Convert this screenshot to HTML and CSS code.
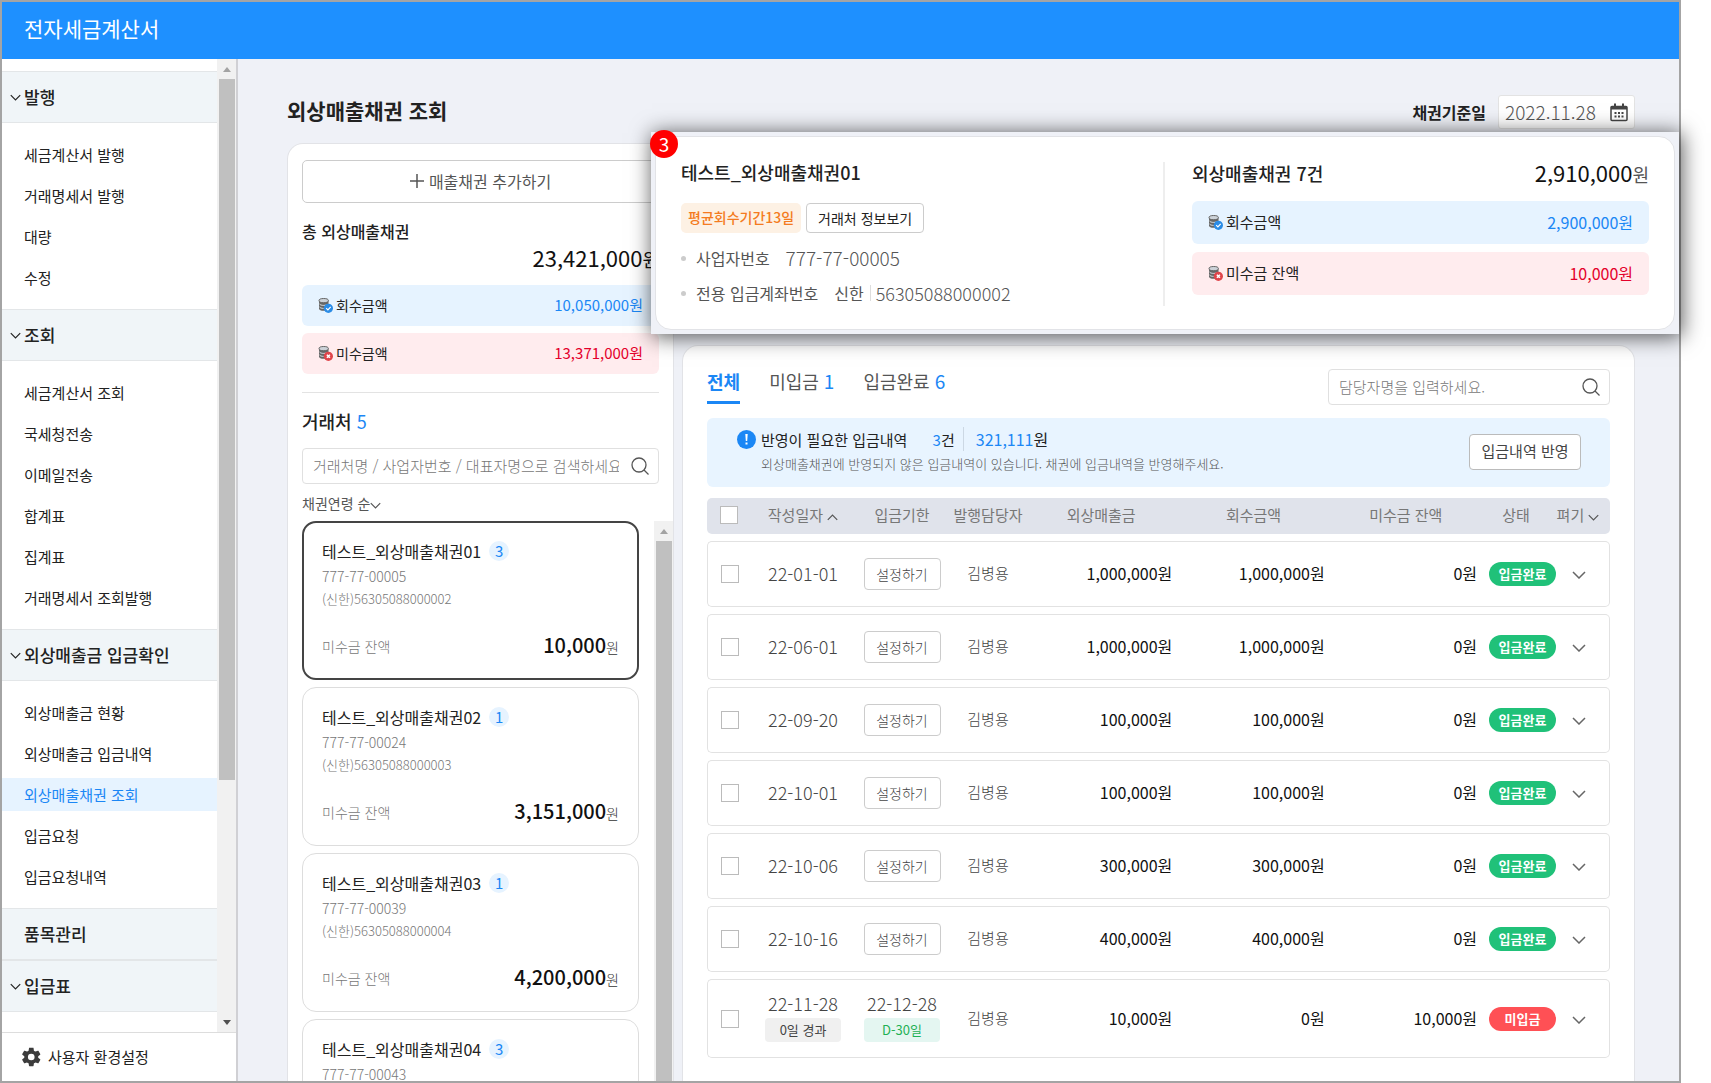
FILE: index.html
```html
<!DOCTYPE html>
<html lang="ko">
<head>
  <meta charset="UTF-8" />
  <title>외상매출채권 조회</title>
  <link rel="stylesheet" href="styles.css">
</head>
<body>
  <!-- Shared icons -->
  <svg class="icon-defs" aria-hidden="true">
    <symbol id="i-down" viewBox="0 0 14 8"><path d="M1 1l6 6 6-6" fill="none" stroke="currentColor" stroke-width="1.5"/></symbol>
    <symbol id="i-up" viewBox="0 0 14 8"><path d="M1 7l6-6 6 6" fill="none" stroke="currentColor" stroke-width="1.5"/></symbol>
    <symbol id="i-search" viewBox="0 0 18 18"><circle cx="8" cy="8" r="7" fill="none" stroke="currentColor" stroke-width="1.3"/><path d="M13 13l4.5 4.5" stroke="currentColor" stroke-width="1.3"/></symbol>
    <symbol id="i-plus" viewBox="0 0 14 14"><path d="M7 0v14M0 7h14" stroke="currentColor" stroke-width="1.5"/></symbol>
    <symbol id="i-coins" viewBox="0 0 15 15">
      <path d="M1 2.5v8.2c0 1.2 2 2.1 4.7 2.1s4.8-.9 4.8-2.1V2.5z" fill="#666"/>
      <ellipse cx="5.7" cy="2.6" rx="4.7" ry="2.1" fill="#ccd2d8" stroke="#666"/>
      <path d="M1.5 6c.8 1 2.3 1.4 4.2 1.4S9.2 7 10 6M1.5 9c.8 1 2.3 1.4 4.2 1.4" fill="none" stroke="#dde3e8"/>
    </symbol>
    <symbol id="i-paid" viewBox="0 0 15 15">
      <use href="#i-coins"/>
      <circle cx="10.4" cy="10.3" r="4.6" fill="#2b8ce6"/>
      <path d="M8.2 10.2l1.7 1.7 2.8-3" fill="none" stroke="#fff" stroke-width="1.2"/>
    </symbol>
    <symbol id="i-unpaid" viewBox="0 0 15 15">
      <use href="#i-coins"/>
      <circle cx="10.4" cy="10.3" r="4.6" fill="#e0454b"/>
      <path d="M8.9 8.8l3 3m0-3l-3 3" stroke="#fff" stroke-width="1.6"/>
    </symbol>
  </svg>

  <div class="app">
    <header class="topbar">전자세금계산서</header>

    <div class="body">
      <aside class="sidebar">
        <div class="menu-wrap">
          <nav class="menu">
            <h2><svg class="chev"><use href="#i-down"/></svg>발행</h2>
            <div class="menu-list">
              <a href="#">세금계산서 발행</a>
              <a href="#">거래명세서 발행</a>
              <a href="#">대량</a>
              <a href="#">수정</a>
            </div>
            <h2><svg class="chev"><use href="#i-down"/></svg>조회</h2>
            <div class="menu-list">
              <a href="#">세금계산서 조회</a>
              <a href="#">국세청전송</a>
              <a href="#">이메일전송</a>
              <a href="#">합계표</a>
              <a href="#">집계표</a>
              <a href="#">거래명세서 조회발행</a>
            </div>
            <h2><svg class="chev"><use href="#i-down"/></svg>외상매출금 입금확인</h2>
            <div class="menu-list">
              <a href="#">외상매출금 현황</a>
              <a href="#">외상매출금 입금내역</a>
              <a href="#" class="active">외상매출채권 조회</a>
              <a href="#">입금요청</a>
              <a href="#">입금요청내역</a>
            </div>
            <h2 class="plain">품목관리</h2>
            <h2><svg class="chev"><use href="#i-down"/></svg>입금표</h2>
          </nav>
          <div class="scrollbar menu-scroll">
            <span class="arrow up"></span>
            <span class="thumb"></span>
            <span class="arrow down"></span>
          </div>
        </div>
        <a href="#" class="settings">
          <svg width="20" height="20" viewBox="0 0 24 24"><path fill="#3c3c3c" d="M19.400 13c.1-.3.1-.7.1-1s0-.7-.1-1l2.400-1.800c.2-.2.300-.5.1-.7l-2.200-3.900c-.1-.2-.4-.3-.7-.2l-2.800 1.100c-.6-.4-1.200-.8-1.900-1.100L13.900 1.500c0-.3-.3-.5-.5-.5h-4.500c-.3 0-.5.2-.5.5L7.900 4.400c-.7.3-1.300.6-1.900 1.100L3.300 4.400c-.3-.1-.6 0-.7.2L.3 8.500c-.1.2-.1.500.1.700L2.800 11c0 .3-.1.700-.1 1s0 .7.1 1L.4 14.800c-.2.2-.3.500-.1.700l2.300 3.900c.1.200.4.3.7.2L6 18.500c.6.400 1.200.8 1.900 1.100l.5 2.900c0 .3.2.5.5.5h4.500c.2 0 .5-.2.5-.5l.4-2.900c.7-.3 1.300-.6 1.900-1.100l2.800 1.100c.3.1.6 0 .7-.2l2.200-3.900c.2-.2.1-.5-.1-.7zM11.100 16a4 4 0 1 1 0-8 4 4 0 0 1 0 8z"/></svg>
          사용자 환경설정
        </a>
      </aside>

      <main class="content">
        <div class="page-head">
          <h1>외상매출채권 조회</h1>
          <div class="date-field">
            <label for="baseDate">채권기준일</label>
            <div class="date-box">
              <input type="text" id="baseDate" value="2022.11.28">
              <svg width="18" height="20" viewBox="0 0 18 20"><path d="M2 4.500h14a1 1 0 0 1 1 1v12a1 1 0 0 1-1 1H2a1 1 0 0 1-1-1v-12a1 1 0 0 1 1-1z" fill="none" stroke="#444" stroke-width="1.500"/><path d="M1 4h16v3.500H1zM4 1.500h2v4H4zM12 1.500h2v4h-2z" fill="#444"/><path d="M4.500 10h2v2h-2zM8 10h2v2H8zM11.500 10h2v2h-2zM4.500 13.500h2v2h-2zM8 13.500h2v2H8zM11.500 13.500h2v2h-2z" fill="#444"/></svg>
            </div>
          </div>
        </div>

        <div class="columns">
          <!-- Customer list -->
          <section class="panel side">
            <button class="add-btn"><svg width="14" height="14"><use href="#i-plus"/></svg>매출채권 추가하기</button>
            <h3 class="total-label">총 외상매출채권</h3>
            <p class="total">23,421,000<span>원</span></p>
            <div class="sum blue"><svg class="coin"><use href="#i-paid"/></svg>회수금액<b>10,050,000원</b></div>
            <div class="sum red"><svg class="coin"><use href="#i-unpaid"/></svg>미수금액<b>13,371,000원</b></div>
            <hr>
            <h3 class="count-label">거래처 <em>5</em></h3>
            <div class="search">
              <input type="text" aria-label="거래처 검색" placeholder="거래처명 / 사업자번호 / 대표자명으로 검색하세요.">
              <svg width="18" height="18"><use href="#i-search"/></svg>
            </div>
            <button class="sort">채권연령 순<svg class="chev"><use href="#i-down"/></svg></button>
            <div class="cards-wrap">
              <div class="cards" id="cards"></div>
              <div class="scrollbar"><span class="arrow up"></span><span class="thumb"></span></div>
            </div>
          </section>

          <!-- Receivables -->
          <section class="panel detail">
            <div class="tabs-row">
              <div class="tabs">
                <button class="active">전체</button>
                <button>미입금 <em>1</em></button>
                <button>입금완료 <em>6</em></button>
              </div>
              <div class="search manager">
                <input type="text" aria-label="담당자명" placeholder="담당자명을 입력하세요.">
                <svg width="18" height="18"><use href="#i-search"/></svg>
              </div>
            </div>

            <div class="notice">
              <svg class="notice-icon" width="19" height="19" viewBox="0 0 19 19"><circle cx="9.500" cy="9.500" r="9.500" fill="#1b87f5"/><path d="M8.300 4h2.400l-.5 7H8.800zM8.500 12.500h2v2h-2z" fill="#fff"/></svg>
              <div>
                <p class="notice-title">반영이 필요한 입금내역 <span class="notice-count"><em>3</em>건</span><span class="notice-sum"><em>321,111</em>원</span></p>
                <p class="notice-text">외상매출채권에 반영되지 않은 입금내역이 있습니다. 채권에 입금내역을 반영해주세요.</p>
              </div>
              <button>입금내역 반영</button>
            </div>

            <table>
              <colgroup>
                <col class="c-check"><col class="c-date"><col class="c-limit"><col class="c-name">
                <col><col><col>
                <col class="c-state"><col class="c-open">
              </colgroup>
              <thead>
                <tr>
                  <th class="check"><input type="checkbox" aria-label="전체 선택"></th>
                  <th>작성일자 <svg class="chev"><use href="#i-up"/></svg></th>
                  <th>입금기한</th>
                  <th>발행담당자</th>
                  <th>외상매출금</th>
                  <th>회수금액</th>
                  <th>미수금 잔액</th>
                  <th class="state">상태</th>
                  <th class="open">펴기 <svg class="chev"><use href="#i-down"/></svg></th>
                </tr>
              </thead>
              <tbody id="rows"></tbody>
            </table>
          </section>
        </div>
      </main>
    </div>

    <!-- Selected customer summary -->
    <div class="popup">
      <span class="step">3</span>
      <div class="popup-card">
        <div class="popup-info">
          <h3>테스트_외상매출채권01</h3>
          <div class="popup-tags">
            <span class="tag-orange">평균회수기간13일</span>
            <button>거래처 정보보기</button>
          </div>
          <ul>
            <li>사업자번호<span class="num">777-77-00005</span></li>
            <li>전용 입금계좌번호<span class="bank">신한</span><span class="num account">56305088000002</span></li>
          </ul>
        </div>
        <div class="popup-sum">
          <div class="popup-total">
            <h3>외상매출채권 7건</h3>
            <p>2,910,000<span>원</span></p>
          </div>
          <div class="sum blue"><svg class="coin"><use href="#i-paid"/></svg>회수금액<b>2,900,000원</b></div>
          <div class="sum red"><svg class="coin"><use href="#i-unpaid"/></svg>미수금 잔액<b>10,000원</b></div>
        </div>
      </div>
    </div>
  </div>

  <script>
    const customers = [
      { name: "테스트_외상매출채권01", count: 3, no: "777-77-00005", account: "56305088000002", balance: "10,000" },
      { name: "테스트_외상매출채권02", count: 1, no: "777-77-00024", account: "56305088000003", balance: "3,151,000" },
      { name: "테스트_외상매출채권03", count: 1, no: "777-77-00039", account: "56305088000004", balance: "4,200,000" },
      { name: "테스트_외상매출채권04", count: 3, no: "777-77-00043", account: "", balance: "" }
    ];

    const rows = [
      { date: "22-01-01", amount: "1,000,000", paid: "1,000,000", left: "0" },
      { date: "22-06-01", amount: "1,000,000", paid: "1,000,000", left: "0" },
      { date: "22-09-20", amount: "100,000", paid: "100,000", left: "0" },
      { date: "22-10-01", amount: "100,000", paid: "100,000", left: "0" },
      { date: "22-10-06", amount: "300,000", paid: "300,000", left: "0" },
      { date: "22-10-16", amount: "400,000", paid: "400,000", left: "0" },
      { date: "22-11-28", amount: "10,000", paid: "0", left: "10,000", passed: "0일 경과", limit: "22-12-28", dday: "D-30일" }
    ];

    document.getElementById("cards").innerHTML = customers.map((c, i) => `
      <article class="card ${i === 0 ? "selected" : ""}">
        <h4>${c.name}<span class="badge">${c.count}</span></h4>
        <p>${c.no}</p>
        ${c.account ? `<p class="card-account">(신한)${c.account}</p>` : ""}
        ${c.balance ? `<div class="card-sum">미수금 잔액<span><b>${c.balance}</b>원</span></div>` : ""}
      </article>
    `).join("");

    document.getElementById("rows").innerHTML = rows.map(r => `
      <tr>
        <td class="check"><input type="checkbox" aria-label="${r.date} 선택"></td>
        <td class="date">${r.date}${r.passed ? `<span class="tag">${r.passed}</span>` : ""}</td>
        <td class="date">${r.limit ? `${r.limit}<span class="tag green">${r.dday}</span>` : `<button class="set-btn">설정하기</button>`}</td>
        <td class="name">김병용</td>
        <td class="money">${r.amount}원</td>
        <td class="money">${r.paid}원</td>
        <td class="money">${r.left}원</td>
        <td><span class="pill ${r.limit ? "unpaid" : ""}">${r.limit ? "미입금" : "입금완료"}</span></td>
        <td class="open"><button class="open-btn" aria-label="펴기"><svg width="14" height="8"><use href="#i-down"/></svg></button></td>
      </tr>
    `).join("");
  </script>
</body>
</html>
```
FILE: styles.css
```css
* { box-sizing: border-box; }
body {
  margin: 0;
  padding-right: 30px;
  background: #fff;
  color: #222;
  font-family: "Noto Sans CJK KR", "Noto Sans", sans-serif;
  font-size: 15px;
  line-height: 20px;
  overflow: hidden;
}
h1, h2, h3, h4, p, ul { margin: 0; padding: 0; }
em { font-style: normal; color: #1b87f5; }
a { color: inherit; text-decoration: none; }
button, input { font: inherit; color: inherit; }
button { background: none; border: none; padding: 0; cursor: pointer; }
svg { flex: none; }
.icon-defs { display: none; }
.chev { width: 11px; height: 7px; }

.app {
  position: relative;
  display: flex;
  flex-direction: column;
  height: 100vh;
  border: 2px solid #a4a4a4;
}

.topbar {
  flex: none;
  height: 57px;
  padding-left: 22px;
  background: #1e90ff;
  color: #fff;
  font-size: 21px;
  line-height: 53px;
}

.body { flex: 1; min-height: 0; display: flex; }

/* Sidebar */
.sidebar {
  flex: none;
  width: 236px;
  display: flex;
  flex-direction: column;
  background: #fff;
  border-right: 2px solid #d0d0d4;
}
.menu-wrap { flex: 1; min-height: 0; display: flex; }
.menu { flex: 1; padding-top: 12px; overflow: hidden; }
.menu h2 {
  display: flex;
  align-items: center;
  gap: 3px;
  height: 52px;
  padding-left: 8px;
  background: #f0f5f8;
  border-top: 1px solid #e3e6e8;
  border-bottom: 1px solid #e3e6e8;
  font-size: 17px;
  font-weight: 500;
}
.menu h2.plain { padding-left: 22px; }
.menu-list {
  display: flex;
  flex-direction: column;
  gap: 8px;
  padding: 15px 0;
}
.menu-list a { padding-left: 22px; line-height: 33px; }
.menu-list a.active { background: #e6f3ff; color: #1b87f5; }
.settings {
  display: flex;
  align-items: center;
  gap: 6px;
  height: 49px;
  padding: 0 0 1px 20px;
  border-top: 1px solid #ddd;
}

.scrollbar {
  flex: none;
  width: 19px;
  display: flex;
  flex-direction: column;
  align-items: center;
  background: #f1f1f1;
}
.thumb { flex: 1; width: 16px; background: #c0c0c0; }
.arrow {
  flex: none;
  height: 20px;
  display: flex;
  align-items: center;
}
.arrow::before { content: ""; border: 4px solid transparent; }
.arrow.up::before { border-top: none; border-bottom: 5px solid #a3a3a3; }
.arrow.down::before { border-bottom: none; border-top: 5px solid #505050; }
.menu-scroll { justify-content: space-between; }
.menu-scroll .thumb { flex: none; height: 72%; margin-bottom: auto; }

/* Content */
.content {
  flex: 1;
  min-width: 0;
  display: flex;
  flex-direction: column;
  padding: 36px 44px 0 49px;
  background: #eff1f7;
}
.page-head {
  display: flex;
  justify-content: space-between;
  align-items: flex-start;
  margin-bottom: 14px;
}
h1 { font-size: 21px; line-height: 30px; font-weight: 700; }
.date-field { display: flex; align-items: center; gap: 12px; }
.date-field label { font-size: 16px; font-weight: 700; }
.date-box {
  display: flex;
  align-items: center;
  width: 137px;
  height: 34px;
  padding: 0 6px;
  background: #fff;
  border: 1px solid #e3e3e3;
  border-radius: 3px;
}
.date-box input {
  flex: 1;
  min-width: 0;
  border: none;
  padding: 0;
  background: none;
  color: #555;
  font-size: 19px;
  font-weight: 300;
}

.columns { flex: 1; min-height: 0; display: flex; gap: 8px; }
.panel {
  background: #fff;
  border: 1px solid #e2e3e7;
  border-bottom: none;
  border-radius: 16px 16px 0 0;
}
.side {
  flex: none;
  width: 387px;
  display: flex;
  flex-direction: column;
  padding: 16px 14px 0;
}
.detail { flex: 1; min-width: 0; margin-top: 202px; padding: 23px 24px 0; }

.add-btn {
  display: flex;
  justify-content: center;
  align-items: center;
  gap: 5px;
  height: 43px;
  padding-bottom: 2px;
  border: 1px solid #ccc;
  border-radius: 5px;
  color: #555;
  font-size: 16px;
}
.total-label { margin-top: 18px; font-size: 16px; font-weight: 500; }
.total {
  margin: 3px 0 13px;
  text-align: right;
  color: #111;
  font-size: 22px;
  line-height: 26px;
}
.total span { font-size: 18px; }

.sum {
  display: flex;
  align-items: center;
  height: 41px;
  padding: 0 16px 2px;
  border-radius: 6px;
  font-size: 14px;
}
.sum b { margin-left: auto; font-size: 15px; font-weight: 400; }
.sum.blue { background: #e6f3ff; }
.sum.blue b { color: #1b87f5; }
.sum.red { margin-top: 7px; background: #ffecee; }
.sum.red b { color: #e4002b; }
.coin { width: 15px; height: 15px; margin: 2px 3px 0 0; }

.side hr {
  width: 100%;
  margin: 18px 0;
  border: none;
  border-top: 1px solid #e3e3e3;
}
.count-label { font-size: 18px; font-weight: 500; }
.count-label em { font-weight: 400; }

.search {
  display: flex;
  align-items: center;
  gap: 12px;
  height: 36px;
  padding: 0 9px 0 10px;
  border: 1px solid #e0e0e0;
  border-radius: 4px;
  color: #555;
}
.search input {
  flex: 1;
  min-width: 0;
  border: none;
  padding: 0;
  background: none;
  font-size: 15px;
  font-weight: 300;
}
.search input::placeholder { color: #777; }
.side .search { margin-top: 17px; }
.manager { width: 282px; }

.sort {
  align-self: flex-start;
  margin: 9px 0 8px;
  color: #555;
  font-size: 14px;
}

.cards-wrap {
  flex: 1;
  min-height: 0;
  display: flex;
  justify-content: space-between;
  margin-right: -14px;
}
.cards {
  width: 337px;
  display: flex;
  flex-direction: column;
  gap: 7px;
  overflow: hidden;
}
.card {
  flex: none;
  height: 159px;
  padding: 18px 19px 0;
  border: 1px solid #ddd;
  border-radius: 14px;
  color: #777;
  font-size: 14px;
  font-weight: 300;
}
.card.selected { border: 2px solid #444; padding: 17px 18px 0; }
.card h4 {
  display: flex;
  align-items: center;
  gap: 8px;
  margin-bottom: 1px;
  color: #222;
  font-size: 16px;
  font-weight: 400;
  line-height: 22px;
}
.card p { padding-top: 3px; }
.card .card-account { font-size: 13px; }
.badge {
  width: 20px;
  border-radius: 10px;
  background: #e6f3ff;
  color: #1b87f5;
  text-align: center;
  font-size: 15px;
  line-height: 20px;
}
.card-sum {
  display: flex;
  justify-content: space-between;
  align-items: center;
  margin-top: 24px;
}
.card-sum b { color: #111; font-size: 20px; font-weight: 500; }
.card-sum span { color: #333; line-height: 24px; }

/* Tabs and notice */
.tabs-row { display: flex; justify-content: space-between; align-items: flex-start; }
.tabs { display: flex; gap: 29px; }
.tabs button {
  height: 35px;
  border-bottom: 3px solid transparent;
  padding-bottom: 8px;
  color: #555;
  font-size: 18px;
  line-height: 24px;
}
.tabs em { font-size: 19px; }
.tabs button.active { color: #1b87f5; border-color: #1b87f5; font-weight: 700; }

.notice {
  display: flex;
  align-items: flex-start;
  margin-top: 13px;
  padding: 12px 29px 13px 30px;
  background: #e8f4ff;
  border-radius: 6px;
}
.notice-icon { margin: 0 5px 0 0; }
.notice-title { font-size: 15px; font-weight: 400; }
.notice-count { margin-left: 21px; }
.notice-sum { margin-left: 8px; padding-left: 12px; border-left: 1px solid #ccd8e4; font-size: 16px; line-height: 14px; }
.notice-text { padding-top: 4px; color: #555; font-size: 13px; font-weight: 300; }
.notice button {
  width: 112px;
  height: 36px;
  margin: 4px 0 0 auto;
  padding-bottom: 2px;
  background: #fff;
  border: 1px solid #bbb;
  border-radius: 4px;
  color: #444;
}

/* Receivable table */
table {
  width: 100%;
  margin-top: 4px;
  table-layout: fixed;
  border-collapse: separate;
  border-spacing: 0 7px;
}
.c-check { width: 46px; }
.c-date { width: 100px; }
.c-limit { width: 98px; }
.c-name { width: 74px; }
.c-state { width: 74px; }
.c-open { width: 54px; }
th, td { padding: 0; text-align: center; white-space: nowrap; }
th {
  height: 36px;
  padding-bottom: 2px;
  background: #e0e3eb;
  color: #777;
  font-weight: 400;
}
th .chev { color: #555; }
th.state { padding-right: 6px; }
th.open { padding-right: 10px; }
th:first-child { border-radius: 5px 0 0 5px; }
th:last-child { border-radius: 0 5px 5px 0; }
td {
  height: 66px;
  border: solid #e2e2e2;
  border-width: 1px 0;
}
td:first-child { border-left-width: 1px; border-radius: 5px 0 0 5px; }
td:last-child { border-right-width: 1px; border-radius: 0 5px 5px 0; }
tbody tr:last-child td { height: 79px; }
.check { padding-left: 13px; text-align: left; }
.check input {
  display: block;
  appearance: none;
  width: 18px;
  height: 18px;
  margin: 0;
  background: #fff;
  border: 1px solid #bbb;
}
td.date { padding-bottom: 2px; color: #444; font-size: 18px; font-weight: 300; }
td.name { padding-bottom: 2px; color: #444; font-weight: 300; }
td.money { padding: 0 5px 2px 0; text-align: right; color: #111; font-size: 16px; }
.set-btn {
  display: block;
  width: 77px;
  height: 32px;
  margin: 2px auto 0;
  border: 1px solid #ccc;
  border-radius: 4px;
  font-size: 14px;
}
.tag {
  display: block;
  width: 76px;
  margin: 5px auto 0;
  border-radius: 4px;
  background: #f0f0f0;
  font-size: 13px;
  font-weight: 400;
  line-height: 24px;
}
.tag.green { background: #e4f6f1; color: #1fb155; }
.pill {
  display: block;
  width: 67px;
  margin-left: 7px;
  border-radius: 12px;
  background: #20c179;
  color: #fff;
  font-size: 13px;
  font-weight: 700;
  line-height: 24px;
}
.pill.unpaid { background: #ff5055; }
.open-btn { display: block; margin: 0 auto; color: #666; line-height: 8px; }
td.open { padding-right: 8px; }

/* Popup */
.popup {
  position: absolute;
  top: 130px;
  left: 649px;
  right: 0;
  padding: 4px;
  background: #eff1f7;
  box-shadow: 2px 2px 20px 1px rgba(0, 0, 0, 0.65);
}
.step {
  position: absolute;
  top: -2px;
  left: -1px;
  width: 28px;
  border-radius: 14px;
  background: #f00;
  color: #fff;
  text-align: center;
  font-size: 19px;
  line-height: 28px;
}
.popup-card {
  display: flex;
  padding: 25px 25px 23px;
  background: #fff;
  border: 1px solid #e2e3e7;
  border-radius: 16px;
}
.popup h3 { font-size: 18px; font-weight: 500; line-height: 20px; }
.popup-info { flex: 1; border-right: 2px solid #eee; }
.popup-tags { display: flex; gap: 5px; margin: 21px 0 12px; }
.tag-orange {
  padding: 0 7px;
  border-radius: 5px;
  background: #fdf1e4;
  color: #f47b20;
  font-size: 14px;
  font-weight: 500;
  line-height: 28px;
}
.popup-tags button {
  width: 118px;
  height: 30px;
  border: 1px solid #ccc;
  border-radius: 4px;
  font-size: 14px;
}
.popup ul { list-style: none; color: #555; font-size: 16px; }
.popup li { display: flex; align-items: center; height: 26px; }
.popup li + li { margin-top: 9px; }
.popup li::before {
  content: "";
  width: 5px;
  height: 5px;
  margin-right: 10px;
  border-radius: 50%;
  background: #ccc;
}
.num { margin-left: 16px; font-size: 19px; font-weight: 300; }
.bank { margin-left: 16px; }
.account { margin-left: 6px; padding-left: 5px; border-left: 1px solid #ddd; font-size: 18px; line-height: 16px; }
.popup-sum { width: 484px; padding-left: 27px; }
.popup-total {
  display: flex;
  justify-content: space-between;
  align-items: center;
  height: 22px;
  margin-bottom: 17px;
}
.popup-total p { color: #111; font-size: 22px; }
.popup-total span { color: #555; font-size: 18px; }
.popup .sum { height: 43px; font-size: 15px; }
.popup .sum b { font-size: 16px; }
.popup .sum.red { margin-top: 8px; }
```
